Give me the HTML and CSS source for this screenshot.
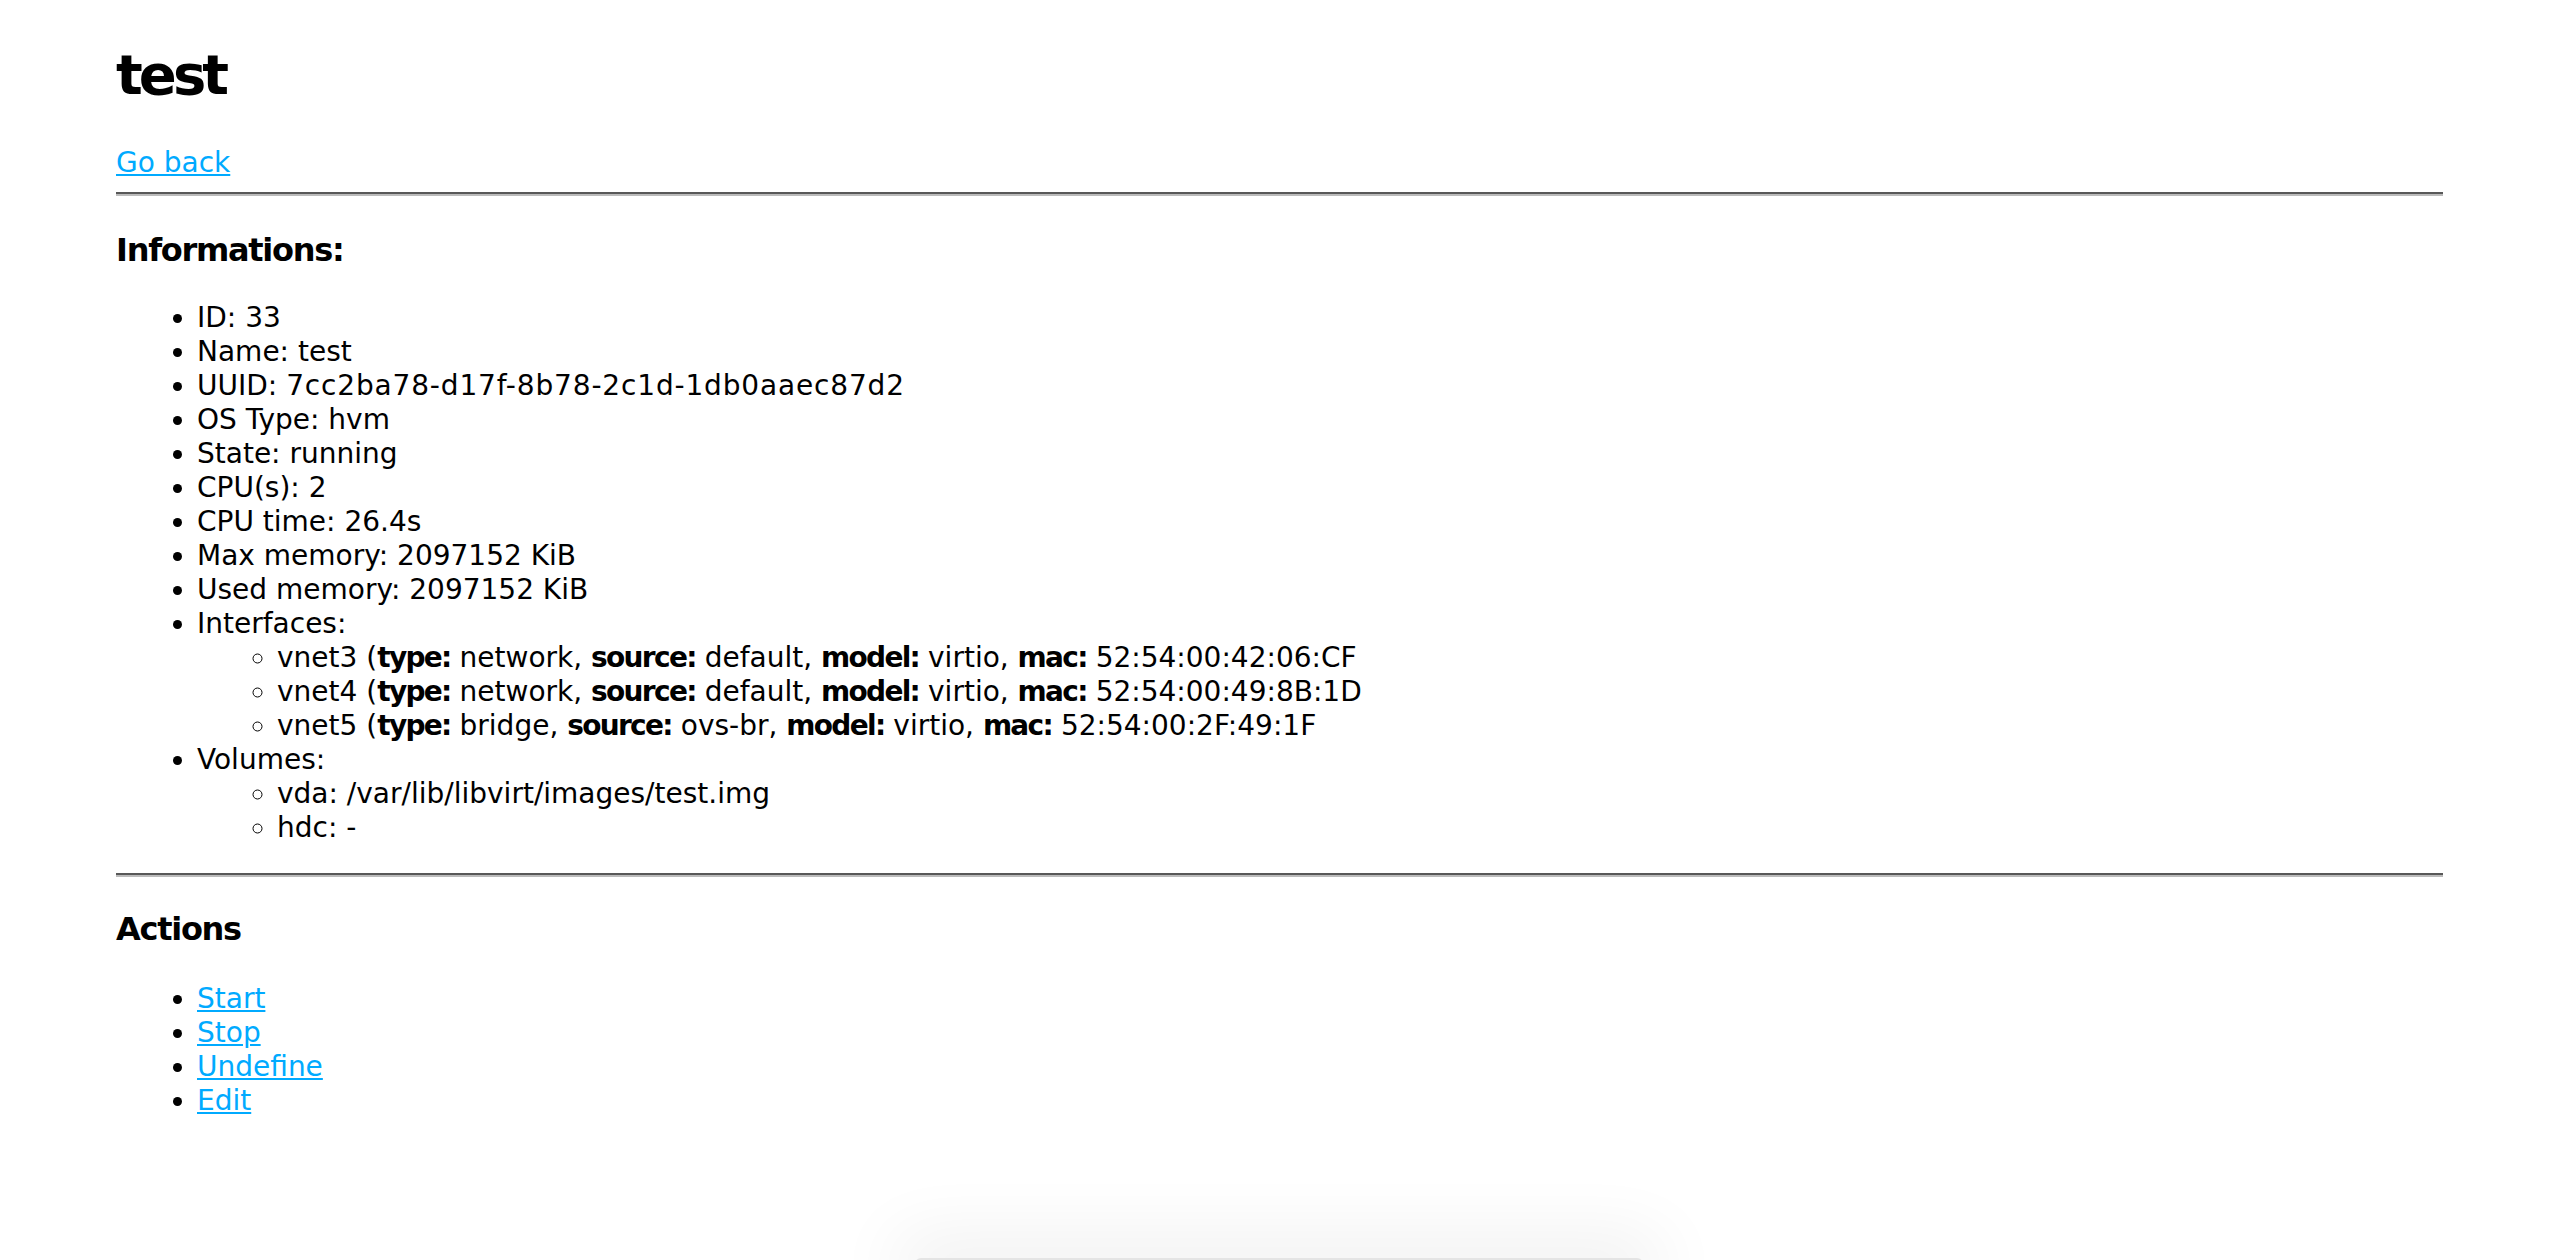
FILE: index.html
```html
<!DOCTYPE html>
<html>
<head>
<meta charset="utf-8">
<title>test</title>
<link rel="stylesheet" href="styles.css">
</head>
<body>
<div class="page">
  <h1 class="title">test</h1>
  <p class="back"><a href="#">Go back</a></p>
  <hr class="rule">
  <h3 class="section">Informations:</h3>
  <ul class="list">
    <li>ID: 33</li>
    <li>Name: test</li>
    <li>UUID: <span class="num">7cc2ba78-d17f-8b78-2c1d-1db0aaec87d2</span></li>
    <li>OS Type: hvm</li>
    <li>State: running</li>
    <li>CPU(s): 2</li>
    <li>CPU time: 26.4s</li>
    <li>Max memory: 2097152 KiB</li>
    <li>Used memory: 2097152 KiB</li>
    <li>Interfaces:
      <ul class="sublist">
        <li>vnet3 (<b>type:</b> network, <b>source:</b> default, <b>model:</b> virtio, <b>mac:</b> 52:54:00:42:06:CF</li>
        <li>vnet4 (<b>type:</b> network, <b>source:</b> default, <b>model:</b> virtio, <b>mac:</b> 52:54:00:49:8B:1D</li>
        <li>vnet5 (<b>type:</b> bridge, <b>source:</b> ovs-br, <b>model:</b> virtio, <b>mac:</b> 52:54:00:2F:49:1F</li>
      </ul>
    </li>
    <li>Volumes:
      <ul class="sublist">
        <li>vda: /var/lib/libvirt/images/test.img</li>
        <li>hdc: -</li>
      </ul>
    </li>
  </ul>
  <hr class="rule rule-second">
  <h3 class="section section-actions">Actions</h3>
  <ul class="list actions">
    <li><a href="#">Start</a></li>
    <li><a href="#">Stop</a></li>
    <li><a href="#">Undefine</a></li>
    <li><a href="#">Edit</a></li>
  </ul>
</div>
<div class="dock-shadow"></div>
</body>
</html>
```
FILE: styles.css
```css
html, body {
  margin: 0;
  padding: 0;
  background: #ffffff;
}

body {
  font-family: "DejaVu Sans", "Liberation Sans", sans-serif;
  font-size: 28px;
  line-height: 34px;
  color: #000000;
}

.page {
  padding: 43px 117px 0 116px;
}

a {
  color: #00aaff;
  text-decoration: underline;
  text-underline-offset: 2px;
  text-decoration-thickness: 2px;
}

b {
  font-weight: bold;
  letter-spacing: -0.06em;
}

.num {
  letter-spacing: 0.03em;
}

.title {
  margin: 0 0 39px 0;
  font-size: 56px;
  line-height: 64px;
  font-weight: bold;
  letter-spacing: -0.07em;
}

.back {
  margin: 0;
}

.rule {
  margin: 12px 0 0 0;
  height: 0;
  border: none;
  border-top: 2px solid #585858;
  border-bottom: 2px solid #bbbbbb;
}

.rule-second {
  margin-top: 28px;
}

.section {
  margin: 35px 0 0 0;
  font-size: 32px;
  line-height: 38px;
  font-weight: bold;
  letter-spacing: -0.04em;
}

.section-actions {
  margin-top: 33px;
}

.list {
  margin: 32px 0 0 0;
  padding: 0 0 0 81px;
  list-style-type: disc;
}

.actions {
  margin-top: 34px;
}

.sublist {
  margin: 0;
  padding: 0 0 0 80px;
  list-style-type: circle;
}

.dock-shadow {
  position: fixed;
  left: 915px;
  width: 728px;
  bottom: -10px;
  height: 12px;
  background: #e4e4e4;
  box-shadow: 0 0 70px 20px rgba(0, 0, 0, 0.07);
  border-radius: 6px;
}
```
